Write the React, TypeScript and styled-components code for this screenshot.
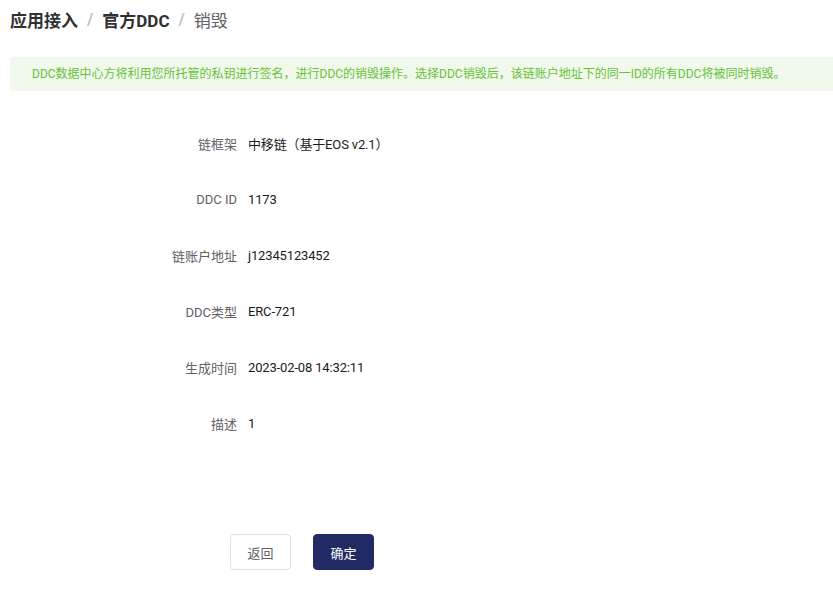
import React from 'react';
import styled, { createGlobalStyle } from 'styled-components';

const GlobalStyle = createGlobalStyle`
    html, body {
        margin: 0;
        padding: 0;
        background: #ffffff;
        overflow: hidden;
    }
    body {
        font-family: Roboto, "Noto Sans CJK SC", sans-serif;
    }
`;

const Page = styled.div`
    width: 843px;
    padding: 6px 0 0 10px;
    box-sizing: border-box;
`;

const Breadcrumb = styled.nav`
    display: flex;
    align-items: center;
    height: 26px;
    font-size: 17px;
`;

const Crumb = styled.span<{ $current?: boolean }>`
    font-weight: ${p => (p.$current ? 400 : 700)};
    color: ${p => (p.$current ? '#606266' : '#303133')};
`;

const Separator = styled.span`
    margin: 0 9px;
    color: #c0c4cc;
    font-weight: 700;
`;

const Alert = styled.div`
    margin-top: 25px;
    background-color: #f0f9eb;
    color: #67c23a;
    font-size: 12px;
    line-height: 18px;
    padding: 8px 22px;
    border-radius: 4px;
`;

const Form = styled.div`
    display: flex;
    flex-direction: column;
    gap: 24px;
    margin-top: 36px;
    padding-left: 138px;
`;

const Row = styled.div`
    display: flex;
    align-items: center;
    height: 32px;
    font-size: 13px;
`;

const Label = styled.div`
    box-sizing: border-box;
    width: 100px;
    padding-right: 11px;
    text-align: right;
    color: #606266;
`;

const Value = styled.div`
    color: #1a1a1a;
    letter-spacing: -0.15px;
`;

const Actions = styled.div`
    display: flex;
    gap: 22px;
    margin-top: 95px;
    padding-left: 220px;
`;

const Button = styled.button<{ $primary?: boolean }>`
    width: 61px;
    height: 36px;
    border-radius: 4px;
    font-family: Roboto, "Noto Sans CJK SC", sans-serif;
    font-size: 13px;
    cursor: pointer;
    border: 1px solid ${p => (p.$primary ? '#222a64' : '#dcdfe6')};
    background: ${p => (p.$primary ? '#222a64' : '#ffffff')};
    color: ${p => (p.$primary ? '#ffffff' : '#606266')};
`;

const fields = [
    { label: '链框架', value: '中移链（基于EOS v2.1）' },
    { label: 'DDC ID', value: '1173' },
    { label: '链账户地址', value: 'j12345123452' },
    { label: 'DDC类型', value: 'ERC-721' },
    { label: '生成时间', value: '2023-02-08 14:32:11' },
    { label: '描述', value: '1' },
];

const App: React.FC = () => {
    return (
        <>
            <GlobalStyle />
            <Page>
                <Breadcrumb>
                    <Crumb>应用接入</Crumb>
                    <Separator>/</Separator>
                    <Crumb>官方DDC</Crumb>
                    <Separator>/</Separator>
                    <Crumb $current>销毁</Crumb>
                </Breadcrumb>
                <Alert>
                    DDC数据中心方将利用您所托管的私钥进行签名，进行DDC的销毁操作。选择DDC销毁后，该链账户地址下的同一ID的所有DDC将被同时销毁。
                </Alert>
                <Form>
                    {fields.map(f => (
                        <Row key={f.label}>
                            <Label>{f.label}</Label>
                            <Value>{f.value}</Value>
                        </Row>
                    ))}
                </Form>
                <Actions>
                    <Button>返回</Button>
                    <Button $primary>确定</Button>
                </Actions>
            </Page>
        </>
    );
};

export default App;
